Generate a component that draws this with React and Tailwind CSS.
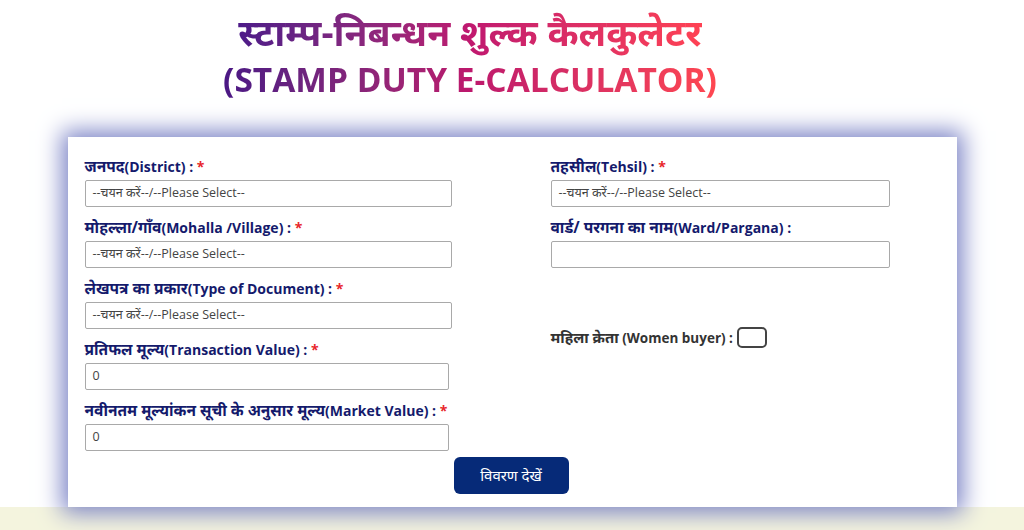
const FONT = "'Open Sans', 'Noto Sans', 'Noto Sans Devanagari', sans-serif";

const SELECT = '--चयन करें--/--Please Select--';

function Label({ hi, en, required }) {
  return (
    <div className="text-[14px] font-bold leading-[18px] text-[#141a6c] whitespace-nowrap">
      <span className="text-[15.5px]">{hi}</span>({en}) :
      {required && <span className="text-[#e8262b]"> *</span>}
    </div>
  );
}

function Field({ hi, en, required, value, width }) {
  return (
    <div className="flex flex-col gap-[4px]">
      <Label hi={hi} en={en} required={required} />
      <div
        className={`h-[27px] ${width} border border-[#a9a9a9] rounded-[2px] bg-white px-[7px] flex items-center text-[12.5px] text-[#444]`}
      >
        {value}
      </div>
    </div>
  );
}

export default function App() {
  return (
    <div className="w-[1024px] h-[530px] overflow-hidden bg-white flex flex-col" style={{ fontFamily: FONT }}>
      {/* Title */}
      <div className="w-[940px] h-[137px] flex flex-col items-center pt-[7px]">
        <h1 className="text-[37.5px] font-bold leading-[50px] bg-gradient-to-r from-[#4d1a88] via-[#c0186f] to-[#ff4253] bg-clip-text text-transparent">
          स्टाम्प-निबन्धन शुल्क कैलकुलेटर
        </h1>
        <h2 className="text-[33.5px] font-bold leading-[44px] bg-gradient-to-r from-[#4a1784] via-[#bd176c] to-[#ff4750] bg-clip-text text-transparent">
          (STAMP DUTY E-CALCULATOR)
        </h2>
      </div>

      {/* Form card */}
      <div className="relative z-10 mx-auto w-[889px] h-[370px] bg-white shadow-[0_0_22px_6px_#7c84c6] pl-[17px] pt-[20px] flex">
        <div className="w-[466px] flex flex-col">
          <div className="flex flex-col gap-[11px]">
            <Field hi="जनपद" en="District" required value={SELECT} width="w-[367px]" />
            <Field hi="मोहल्ला/गाँव" en="Mohalla /Village" required value={SELECT} width="w-[367px]" />
            <Field hi="लेखपत्र का प्रकार" en="Type of Document" required value={SELECT} width="w-[367px]" />
            <Field hi="प्रतिफल मूल्य" en="Transaction Value" required value="0" width="w-[364px]" />
            <Field
              hi="नवीनतम मूल्यांकन सूची के अनुसार मूल्य"
              en="Market Value"
              required
              value="0"
              width="w-[364px]"
            />
          </div>
          <button className="mt-[6px] ml-[369px] w-[115px] h-[37px] rounded-[6px] bg-[#062a78] text-white text-[15px]">
            विवरण देखें
          </button>
        </div>

        <div className="flex flex-col">
          <div className="flex flex-col gap-[11px]">
            <Field hi="तहसील" en="Tehsil" required value={SELECT} width="w-[339px]" />
            <Field hi="वार्ड/ परगना का नाम" en="Ward/Pargana" value="" width="w-[339px]" />
          </div>
          <div className="mt-[58px] flex items-center gap-[4px]">
            <span className="text-[13.5px] font-bold text-[#333] whitespace-nowrap">
              <span className="text-[15px]">महिला क्रेता</span> (Women buyer) :
            </span>
            <span className="w-[30px] h-[21px] rounded-[5px] border-2 border-[#444] bg-white" />
          </div>
        </div>
      </div>

      {/* Lower band */}
      <div className="flex-1 bg-[#f4f4de]" />
    </div>
  );
}
